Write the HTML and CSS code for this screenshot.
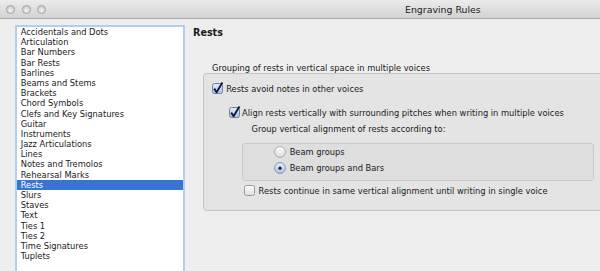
FILE: index.html
```html
<!DOCTYPE html>
<html>
<head>
<meta charset="utf-8">
<title>Engraving Rules</title>
<link rel="stylesheet" href="styles.css">
</head>
<body>
<div class="window">
  <div class="titlebar">
    <div class="lights"><span class="light"></span><span class="light"></span><span class="light"></span></div>
    <div class="title">Engraving Rules</div>
  </div>
  <div class="main">
    <ul class="list">
      <li>Accidentals and Dots</li>
      <li>Articulation</li>
      <li>Bar Numbers</li>
      <li>Bar Rests</li>
      <li>Barlines</li>
      <li>Beams and Stems</li>
      <li>Brackets</li>
      <li>Chord Symbols</li>
      <li>Clefs and Key Signatures</li>
      <li>Guitar</li>
      <li>Instruments</li>
      <li>Jazz Articulations</li>
      <li>Lines</li>
      <li>Notes and Tremolos</li>
      <li>Rehearsal Marks</li>
      <li class="sel">Rests</li>
      <li>Slurs</li>
      <li>Staves</li>
      <li>Text</li>
      <li>Ties 1</li>
      <li>Ties 2</li>
      <li>Time Signatures</li>
      <li>Tuplets</li>
    </ul>
    <div class="pane">
      <h1 class="heading">Rests</h1>
      <div class="group-label">Grouping of rests in vertical space in multiple voices</div>
      <div class="group">
        <div class="row row1">
          <svg class="box" width="11" height="11" viewBox="0 0 11 11"><defs><linearGradient id="cb" x1="0" y1="0" x2="0" y2="1"><stop offset="0" stop-color="#e4eefb"/><stop offset="1" stop-color="#a8c2e6"/></linearGradient></defs><rect x="0.5" y="0.5" width="10" height="10" rx="2" fill="url(#cb)" stroke="#6f83a3"/><path d="M2.2 5.6 L4.6 9.2 L10.4 -0.6" fill="none" stroke="#15183a" stroke-width="1.9" stroke-linejoin="round"/></svg>
          <span>Rests avoid notes in other voices</span>
        </div>
        <div class="row row2">
          <svg class="box" width="11" height="11" viewBox="0 0 11 11"><defs><linearGradient id="cb2" x1="0" y1="0" x2="0" y2="1"><stop offset="0" stop-color="#e4eefb"/><stop offset="1" stop-color="#a8c2e6"/></linearGradient></defs><rect x="0.5" y="0.5" width="10" height="10" rx="2" fill="url(#cb2)" stroke="#6f83a3"/><path d="M2.2 5.6 L4.6 9.2 L10.4 -0.6" fill="none" stroke="#15183a" stroke-width="1.9" stroke-linejoin="round"/></svg>
          <span>Align rests vertically with surrounding pitches when writing in multiple voices</span>
        </div>
        <div class="sub-label">Group vertical alignment of rests according to:</div>
        <div class="subgroup">
          <div class="row radio-row">
            <svg class="radio" width="12" height="12" viewBox="0 0 12 12"><defs><linearGradient id="rb" x1="0" y1="0" x2="0" y2="1"><stop offset="0" stop-color="#ffffff"/><stop offset="1" stop-color="#dcdcdc"/></linearGradient></defs><circle cx="6" cy="6" r="5.4" fill="url(#rb)" stroke="#9a9a9a" stroke-width="0.8"/></svg>
            <span>Beam groups</span>
          </div>
          <div class="row radio-row second">
            <svg class="radio" width="12" height="12" viewBox="0 0 12 12"><defs><linearGradient id="rs" x1="0" y1="0" x2="0" y2="1"><stop offset="0" stop-color="#e6effb"/><stop offset="1" stop-color="#a9c3e7"/></linearGradient></defs><circle cx="6" cy="6" r="5.4" fill="url(#rs)" stroke="#7186a6" stroke-width="0.8"/><circle cx="6" cy="6.2" r="1.6" fill="#15183a"/></svg>
            <span>Beam groups and Bars</span>
          </div>
        </div>
        <div class="row row3">
          <svg class="box" width="11" height="11" viewBox="0 0 11 11"><defs><linearGradient id="cu" x1="0" y1="0" x2="0" y2="1"><stop offset="0" stop-color="#ffffff"/><stop offset="1" stop-color="#dedede"/></linearGradient></defs><rect x="0.5" y="0.5" width="10" height="10" rx="2" fill="url(#cu)" stroke="#9a9a9a"/></svg>
          <span>Rests continue in same vertical alignment until writing in single voice</span>
        </div>
      </div>
    </div>
  </div>
</div>
</body>
</html>
```
FILE: styles.css
```css
* { box-sizing: border-box; }
html, body {
  margin: 0;
  padding: 0;
}
body {
  width: 600px;
  height: 271px;
  overflow: hidden;
  background: #eeeeee;
  font-family: "DejaVu Sans", "Liberation Sans", sans-serif;
  color: #1a1a1a;
}
.window {
  width: 600px;
  height: 271px;
  overflow: hidden;
}
.titlebar {
  height: 19px;
  display: flex;
  align-items: center;
  background: linear-gradient(#ececec, #d2d2d2);
  border-bottom: 1px solid #a9a9a9;
}
.lights {
  display: flex;
  gap: 6.5px;
  padding-left: 6px;
  padding-top: 1px;
}
.light {
  width: 9px;
  height: 9px;
  border-radius: 50%;
  background: radial-gradient(circle at 50% 65%, #f2f2f2, #cfcfcf 70%);
  border: 1px solid #a2a2a2;
}
.title {
  margin-left: 359px;
  font-size: 9.4px;
  color: #222;
}
.main {
  display: flex;
  gap: 5px;
  padding: 6px 0 0 15px;
}
.list {
  margin: 0;
  padding: 0;
  list-style: none;
  width: 170px;
  height: 250px;
  flex: none;
  background: #fff;
  border: 2px solid #b3cdec;
  font-size: 8.3px;
}
.list li {
  height: 10.2px;
  line-height: 10.2px;
  padding-left: 3.7px;
  white-space: nowrap;
}
.list li.sel {
  background: #3a74d3;
  color: #fff;
}
.pane {
  flex: 1;
  min-width: 0;
}
.heading {
  margin: 2px 0 0 3px;
  font-size: 9.6px;
  font-weight: bold;
  line-height: 12px;
}
.group-label {
  margin: 23.5px 0 0 22px;
  font-size: 8.3px;
  line-height: 10px;
  white-space: nowrap;
}
.group {
  margin-left: 13px;
  width: 420px;
  height: 138px;
  border: 1px solid #c4c4c4;
  border-radius: 4px;
  background: #e4e4e4;
  padding-left: 8px;
  font-size: 8.3px;
}
.row {
  display: flex;
  align-items: center;
  height: 12px;
  white-space: nowrap;
}
.row svg { overflow: visible; flex: none; }
.row1 { margin-top: 9.2px; gap: 3.2px; }
.row2 { margin-top: 12.3px; margin-left: 16.5px; gap: 2.6px; }
.sub-label {
  margin: 4.3px 0 0 39.5px;
  line-height: 12px;
  white-space: nowrap;
}
.subgroup {
  margin: 7.4px 0 0 30.3px;
  width: 352px;
  height: 38px;
  border: 1px solid #c8c8c8;
  border-radius: 3px;
  background: #dedede;
  padding: 2.8px 0 0 31.2px;
}
.radio-row { gap: 3.2px; }
.radio-row.second { margin-top: 3.2px; }
.row3 { margin-top: 4.1px; margin-left: 32px; gap: 3.6px; }
```
